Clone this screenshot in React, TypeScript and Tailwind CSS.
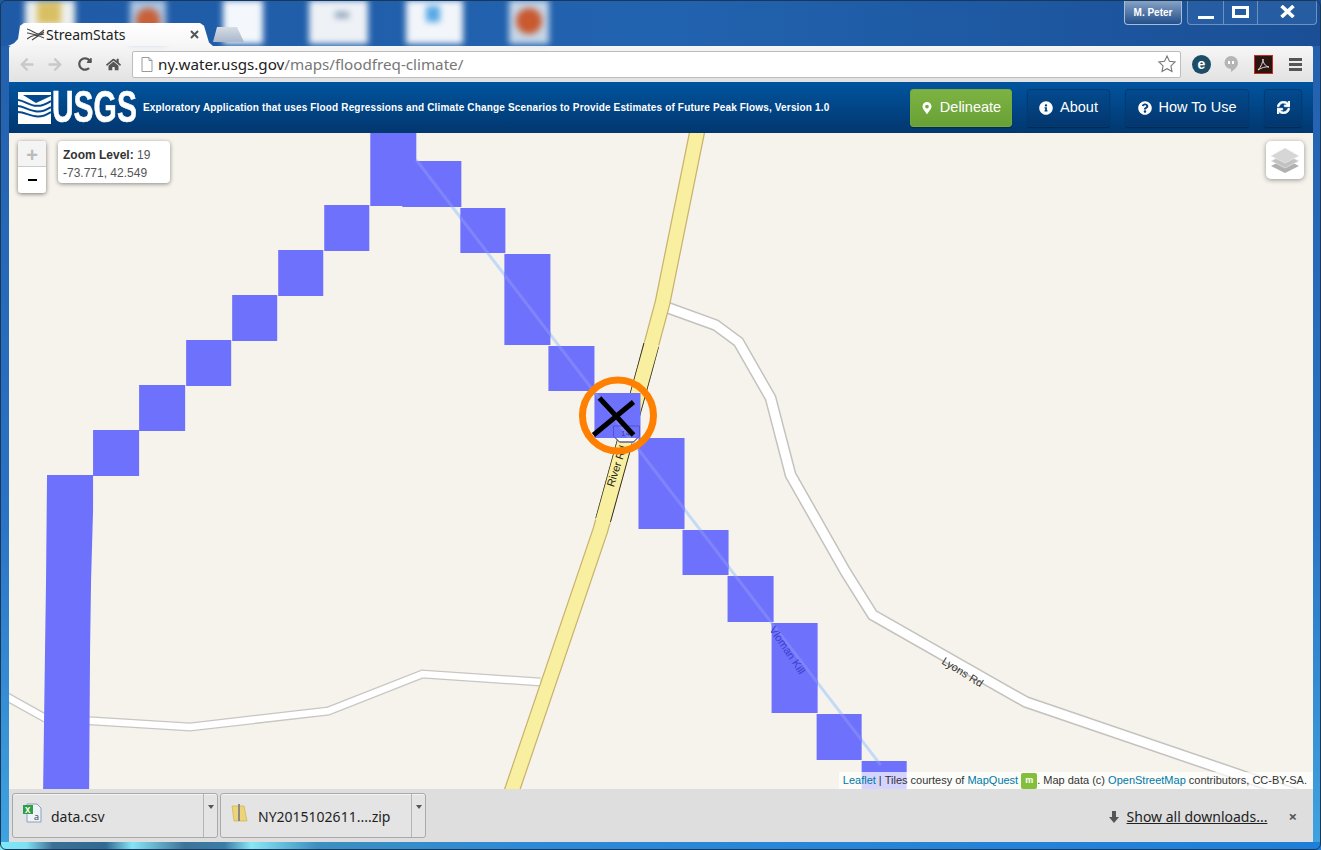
import React from "react";
import { FaInfoCircle, FaQuestionCircle, FaSync, FaHome, FaRedoAlt, FaArrowLeft, FaArrowRight, FaMapMarkerAlt } from "react-icons/fa";

const sq: [number, number, number, number][] = [
  [370, 125, 46, 81], [402, 161, 59, 46], [460, 208, 45, 45], [504, 254, 46, 91], [548, 346, 46, 45],
  [594, 393, 46, 45], [638, 438, 46, 91], [682, 530, 46, 45], [727, 576, 46, 46], [771, 623, 46, 90],
  [816, 714, 45, 46], [861, 761, 45, 40], [324, 205, 45, 46], [278, 250, 45, 46], [232, 295, 45, 46],
  [186, 340, 45, 46], [139, 385, 46, 46], [93, 430, 46, 46],
];

function MapCanvas() {
  const mainRoad = "M698 125 L662 303 L644 370 L600 530 L510 795";
  const lyons = "M668 308 L715 325 L738 342 L770 398 L790 475 L845 572 L872 615 L1025 702 L1312 800";
  const west = "M0 693 L45 718 L190 727 L328 711 L422 674 L540 682";
  const shield = "M613 426 h26 v10 l-6 6 h-14 l-6 -6 z";
  const stream = "M416 160 L880 765";
  return (
    <svg className="absolute inset-0 h-full w-full" viewBox="9 133 1303 656" preserveAspectRatio="none">
      <defs>
        <clipPath id="cells">
          {sq.map(([x, y, w, h], i) => (
            <rect key={i} x={x} y={y} width={w} height={h} />
          ))}
        </clipPath>
      </defs>
      <path d={lyons} fill="none" stroke="#c4c2be" strokeWidth="12" />
      <path d={lyons} fill="none" stroke="#ffffff" strokeWidth="9" />
      <path d={west} fill="none" stroke="#c8c6c2" strokeWidth="9" />
      <path d={west} fill="none" stroke="#ffffff" strokeWidth="6.5" />
      <path d={mainRoad} fill="none" stroke="#c9b36d" strokeWidth="16" />
      <path d={mainRoad} fill="none" stroke="#f8efa0" strokeWidth="13.5" />
      <path d="M650.7 345 L644 370 L602.7 520" fill="none" stroke="#2b2b20" strokeWidth="16" />
      <path d="M651.5 343 L644 370 L602 522" fill="none" stroke="#f8efa0" strokeWidth="14.4" />
      <path d={stream} fill="none" stroke="#c3daf6" strokeWidth="3" />
      <g transform="rotate(-72 616 466)">
        <text x="616" y="470" textAnchor="middle" fontSize="11" fill="#222" fontFamily="'Liberation Sans', sans-serif">River Rd</text>
      </g>
      <path d={shield} fill="#fff" stroke="#333" strokeWidth="0.8" />
      {sq.map(([x, y, w, h], i) => (
        <rect key={i} x={x} y={y} width={w} height={h} fill="#6e71fb" />
      ))}
      <path d="M47 475 H93 V510 L91 580 L90 650 L89 795 H43 L45 650 L46 580 Z" fill="#6e71fb" />
      <path d={stream} fill="none" stroke="#8084fb" strokeWidth="3" clipPath="url(#cells)" />
      <path d={shield} fill="none" stroke="#4a4dc0" strokeWidth="0.8" />
      <text x="625" y="436" textAnchor="middle" fontSize="8" fill="#3a3d9a" fontFamily="'Liberation Sans', sans-serif">14</text>
      <g transform="rotate(32 962 672)">
        <text x="962" y="676" textAnchor="middle" fontSize="11" fill="#333" fontFamily="'Liberation Sans', sans-serif">Lyons Rd</text>
      </g>
      <g transform="rotate(56 787 650)">
        <text x="787" y="654" textAnchor="middle" fontSize="11" fill="#3a3fd0" fontFamily="'Liberation Sans', sans-serif">Vloman Kill</text>
      </g>
      <circle cx="617.5" cy="415.5" r="35.5" fill="none" stroke="#ff8000" strokeWidth="7" />
      <path d="M599 398 L633 435 M633 402 L593 435" stroke="#000" strokeWidth="5" fill="none" />
    </svg>
  );
}

function NavButton({ icon, label, className }: { icon: React.ReactNode; label?: string; className: string }) {
  return (
    <div className={`flex h-[38px] items-center justify-center rounded-[3px] border border-[#003b75] bg-gradient-to-b from-[#024a8e] to-[#03376f] text-[14.5px] text-white shadow-[0_1px_1px_rgba(0,0,0,0.3)] ${className}`}>
      {icon}
      {label && <span className="ml-[7px]">{label}</span>}
    </div>
  );
}

function DownloadItem({ name, icon, textClass }: { name: string; icon: React.ReactNode; textClass: string }) {
  return (
    <div className="flex h-[45px] w-[206px] items-stretch rounded-[3px] border border-[#a9a9a9] bg-[#e4e4e4] shadow-[inset_0_1px_0_#f4f4f4]">
      <div className="relative flex flex-1 border-r border-[#b5b5b5]">
        <div className="ml-[10px] mt-[9px] h-[20px] w-[20px]">{icon}</div>
        <span className={`mt-[13px] text-[14px] leading-[20px] text-[#1f1f1f] ${textClass}`}>{name}</span>
      </div>
      <div className="flex w-[13px] justify-center pt-[11px]">
        <div className="h-0 w-0 border-x-[3.5px] border-t-[4px] border-x-transparent border-t-[#555]" />
      </div>
    </div>
  );
}

export default function App() {
  return (
    <div className="relative flex h-[850px] w-[1321px] flex-col overflow-hidden bg-[linear-gradient(to_bottom,#235fab_0%,#2a72c4_60%,#3fa4e0_100%)] font-['Liberation_Sans',sans-serif]">
      <div className="relative h-[46px] shrink-0 bg-gradient-to-r from-[#1f5aa6] via-[#2263af] to-[#1a4f96]">
        <div className="flex h-[46px] items-start pl-[25px] blur-[3px]">
          <div className="h-[44px] w-[50px] bg-[#eef0ee]"><div className="ml-[12px] mt-[2px] h-[22px] w-[24px] bg-[#d9bf63]" /></div>
          <div className="ml-[55px] h-[44px] w-[36px] bg-[#aec6e2]"><div className="ml-[6px] mt-[8px] h-[26px] w-[24px] rounded-full bg-[#c8613a]" /></div>
          <div className="ml-[57px] h-[44px] w-[40px] bg-[#f4f8fc]" />
          <div className="ml-[46px] h-[44px] w-[59px] bg-[#eef2f7]"><div className="ml-[26px] mt-[12px] h-[6px] w-[14px] bg-[#8aa0b8]" /></div>
          <div className="ml-[38px] h-[44px] w-[57px] bg-[#f2f6fa]"><div className="ml-[20px] mt-[6px] h-[16px] w-[14px] bg-[#58a8e6]" /></div>
          <div className="ml-[46px] h-[44px] w-[40px] bg-[#c6d6e8]"><div className="ml-[7px] mt-[8px] h-[26px] w-[26px] rounded-full bg-[#c9592f]" /></div>
        </div>
        <div className="absolute left-[8px] top-[23px] flex h-[23px] w-[205px] items-center bg-gradient-to-b from-white to-[#f6f6f6] pl-[19px] font-['Noto_Sans',sans-serif] text-[14px] text-[#222] [clip-path:polygon(0_100%,6px_88%,10px_70%,12px_12%,16px_0,192px_0,196px_12%,201px_85%,205px_100%)]">
          <svg width="18" height="13" viewBox="0 0 18 13" className="mr-[1px] shrink-0">
            <path d="M0 1 C5 2 8 6 12 6 L17 2 M0 5 C5 5 9 9 17 6 M0 11 C5 7 9 6 17 10 M5 12 L17 4" stroke="#444" strokeWidth="1.1" fill="none" />
          </svg>
          <span>StreamStats</span>
          <svg width="9" height="9" viewBox="0 0 9 9" className="ml-[65px]"><path d="M1 1L8 8M8 1L1 8" stroke="#555" strokeWidth="2" /></svg>
        </div>
        <div className="absolute left-[213px] top-[27px] h-[15px] w-[31px] bg-gradient-to-b from-[#d6dce4] to-[#a9b8cb] [clip-path:polygon(0_100%,4px_0,24px_0,31px_100%)]" />
        <div className="absolute left-[1124px] top-0 flex h-[25px] w-[58px] items-center justify-center rounded-b-[4px] border border-t-0 border-[#a7bdd8] bg-gradient-to-b from-[#8ba6c8] to-[#234f8a] text-[10px] font-bold text-white">M. Peter</div>
        <div className="absolute left-[1187px] top-0 flex h-[25px] w-[130px] rounded-b-[4px] border border-t-0 border-[#6f92bd] bg-[#2f66a9]/60">
          <div className="flex w-[36px] items-end justify-center border-r border-[#6f92bd] pb-[5px]"><div className="h-[3px] w-[16px] bg-white" /></div>
          <div className="flex w-[34px] items-center justify-center border-r border-[#6f92bd]"><div className="h-[12px] w-[17px] border-[3px] border-white" /></div>
          <div className="flex flex-1 items-center justify-center pb-[1px]">
            <svg width="15" height="13" viewBox="0 0 15 13"><path d="M1.5 1L13.5 12M13.5 1L1.5 12" stroke="#fff" strokeWidth="3.6" /></svg>
          </div>
        </div>
      </div>

      <div className="flex min-h-0 flex-1 flex-col pl-[9px] pr-[8px]">
        <div className="flex h-[36px] shrink-0 items-center rounded-t-[2px] bg-gradient-to-b from-[#f6f6f6] to-[#e2e2e2] pl-[10px]">
          <FaArrowLeft className="h-[15px] w-[16px] text-[#c9c9c9]" />
          <FaArrowRight className="ml-[12px] h-[15px] w-[16px] text-[#c9c9c9]" />
          <FaRedoAlt className="ml-[15px] h-[14px] w-[14px] text-[#555]" />
          <FaHome className="ml-[14px] h-[15px] w-[15px] text-[#555]" />
          <div className="ml-[11px] flex h-[27px] w-[1049px] items-center rounded-[2px] border border-[#bdbdbd] bg-white pl-[8px] pr-[3px] font-['Noto_Sans',sans-serif] text-[15.2px]">
            <svg width="12" height="15" viewBox="0 0 12 15" className="mr-[5px]"><path d="M1 .5h7l3 3v11H1z" fill="#fff" stroke="#999" /><path d="M8 .5v3h3" fill="none" stroke="#999" /></svg>
            <span className="text-[#222]">ny.water.usgs.gov</span>
            <span className="text-[#777]">/maps/floodfreq-climate/</span>
            <svg width="20" height="20" viewBox="0 0 24 24" className="ml-auto"><path d="M12 2.5l2.9 6.2 6.8.8-5 4.7 1.3 6.8-6-3.4-6 3.4 1.3-6.8-5-4.7 6.8-.8z" fill="#fff" stroke="#777" strokeWidth="1.3" /></svg>
          </div>
          <div className="ml-[11px] flex h-[19px] w-[19px] items-center justify-center rounded-full bg-[#1d4d66] text-[14px] font-bold leading-none text-white">e</div>
          <svg width="16" height="18" viewBox="0 0 16 18" className="ml-[12px]"><path d="M8 1a7 7 0 0 1 7 7c0 4-4 7-7 9v-3a6.5 6.5 0 0 1 0-13z" fill="#b5b5b5" /><path d="M5 6h2v3H5zM9 6h2v3H9z" fill="#fff" /></svg>
          <div className="ml-[15px] flex h-[19px] w-[19px] items-center justify-center border border-[#c5301a] bg-[#2a1512]">
            <svg width="15" height="15" viewBox="0 0 15 15"><path d="M2 13C5 10 7 5 7 2c0 4 2 7 6 8-4-.5-7 .5-11 3z" fill="none" stroke="#e8d8d8" strokeWidth="1" /></svg>
          </div>
          <div className="ml-[16px] flex w-[13px] flex-col gap-[2px]">
            <div className="h-[3px] bg-[#555]" /><div className="h-[3px] bg-[#555]" /><div className="h-[3px] bg-[#555]" />
          </div>
        </div>

        <div className="flex h-[51px] shrink-0 items-center bg-gradient-to-b from-[#00549f] to-[#02376f] pl-[9px]">
          <svg width="33" height="32" viewBox="0 0 33 32" className="shrink-0">
            <rect width="33" height="32" fill="#fff" />
            <path d="M5 3 H33 V4 L18 11 Z" fill="#04488d" />
            <path d="M0 8 C10 9 16 20 33 9 M0 14 C10 15 18 25 33 15 M0 20 C10 20 18 30 33 20" stroke="#04488d" strokeWidth="2" fill="none" />
          </svg>
          <span className="ml-[1px] w-[85px] origin-left scale-x-[0.67] text-[44.7px] font-bold leading-none text-white [-webkit-text-stroke:0.6px_white]">USGS</span>
          <span className="ml-[6px] w-[700px] whitespace-nowrap text-[10px] font-bold tracking-[0.16px] text-white">Exploratory Application that uses Flood Regressions and Climate Change Scenarios to Provide Estimates of Future Peak Flows, Version 1.0</span>
          <NavButton className="ml-[67px] w-[102px] !border-[#74ab3a] !from-[#7cb342] !to-[#6aa136]" icon={<FaMapMarkerAlt className="h-[12px] w-[12px]" />} label="Delineate" />
          <NavButton className="ml-[15px] w-[83px]" icon={<FaInfoCircle className="h-[14px] w-[14px]" />} label="About" />
          <NavButton className="ml-[15px] w-[124px]" icon={<FaQuestionCircle className="h-[14px] w-[14px]" />} label="How To Use" />
          <NavButton className="ml-[15px] w-[38px]" icon={<FaSync className="h-[13px] w-[13px]" stroke="white" strokeWidth={30} />} />
        </div>

        <div className="relative min-h-0 flex-1 overflow-hidden bg-[#f6f3ec]">
          <MapCanvas />
          <div className="absolute left-[9px] top-[8px] w-[28px] overflow-hidden rounded-[3px] bg-white text-center shadow-[0_1px_4px_rgba(0,0,0,0.5)]">
            <div className="flex h-[26px] items-center justify-center border-b border-[#ccc] bg-[#f4f4f4] pt-[3px] text-[20px] font-bold text-[#bbb]">+</div>
            <div className="flex h-[26px] items-center justify-center"><div className="h-[2px] w-[9px] bg-black" /></div>
          </div>
          <div className="absolute left-[49px] top-[8px] h-[42px] w-[112px] rounded-[4px] bg-white px-[5px] pt-[5px] text-[12px] leading-[18px] text-[#555] shadow-[0_1px_4px_rgba(0,0,0,0.45)]">
            <div><b className="text-[#333]">Zoom Level:</b> 19</div>
            <div>-73.771, 42.549</div>
          </div>
          <div className="absolute right-[9px] top-[8px] flex h-[38px] w-[38px] items-center justify-center rounded-[5px] bg-white shadow-[0_1px_5px_rgba(0,0,0,0.4)]">
            <svg width="30" height="30" viewBox="0 0 30 30">
              <path d="M15 14 L29 21 L15 28 L1 21z" fill="#b0b0b0" />
              <path d="M15 9 L29 16 L15 23 L1 16z" fill="#c2c2c2" stroke="#eee" strokeWidth="0.6" />
              <path d="M15 3 L29 11 L15 18 L1 11z" fill="#d6d6d6" stroke="#eee" strokeWidth="0.6" />
            </svg>
          </div>
          <div className="absolute bottom-0 right-0 flex h-[17px] w-[474px] items-center justify-end whitespace-nowrap bg-white/70 pr-[6px] text-[11px] text-[#333]">
            <span className="text-[#0078a8]">Leaflet</span>
            <span className="mx-[3px]">|</span>
            <span>Tiles courtesy of&nbsp;</span>
            <span className="text-[#0078a8]">MapQuest</span>
            <span className="ml-[3px] flex h-[16px] w-[16px] items-center justify-center rounded-[2px] bg-[#84bf3c] text-[9px] font-bold leading-none text-white">m</span>
            <span>. Map data (c)&nbsp;</span>
            <span className="text-[#0078a8]">OpenStreetMap</span>
            <span>&nbsp;contributors, CC-BY-SA.</span>
          </div>
        </div>

        <div className="flex h-[53px] shrink-0 items-start bg-[#dedede] pl-[3px] pr-[16px] pt-[4px] font-['Noto_Sans',sans-serif]">
          <DownloadItem
            name="data.csv"
            textClass="ml-[8px]"
            icon={
              <svg width="20" height="20" viewBox="0 0 20 20">
                <path d="M4 1h10l4 4v14H4z" fill="#eef3fa" stroke="#8aa0b8" />
                <rect x="0" y="2" width="10" height="9" fill="#2f9e44" />
                <text x="2" y="10" fontSize="8" fontWeight="bold" fill="#fff">X</text>
                <text x="11" y="17" fontSize="9" fill="#345">a</text>
              </svg>
            }
          />
          <div className="ml-[2px]">
            <DownloadItem
              name="NY2015102611....zip"
              textClass="ml-[7px]"
              icon={
                <svg width="20" height="20" viewBox="0 0 20 20">
                  <path d="M1 3h12l3 15H3z" fill="#ecd47a" stroke="#c9a93f" strokeWidth="0.6" />
                  <rect x="7" y="1" width="2" height="17" fill="#8a8a80" />
                </svg>
              }
            />
          </div>
          <div className="ml-auto mt-[13px] flex items-center text-[14px] text-[#222]">
            <svg width="12" height="14" viewBox="0 0 12 14" className="mr-[7px]"><path d="M4 1h4v6h3l-5 6-5-6h3z" fill="#555" /></svg>
            <span className="underline">Show all downloads...</span>
            <span className="ml-[21px] text-[15px] font-bold leading-none text-[#555]">×</span>
          </div>
        </div>
        <div className="-mx-[9px] h-[8px] shrink-0 bg-[linear-gradient(to_right,#7fe8f5_0%,#7fe0f2_2%,#3d6f95_4%,#2f6a92_8%,#86e4f5_10%,#3d7298_14%,#3a7ea8_17%,#8ae6f5_19%,#3d8fc0_24%,#2e8ad6_40%,#1f7fd8_100%)] blur-[0.5px]" />
      </div>
      <div className="pointer-events-none absolute inset-0 rounded-[6px] border border-[#17385a]" />
    </div>
  );
}
